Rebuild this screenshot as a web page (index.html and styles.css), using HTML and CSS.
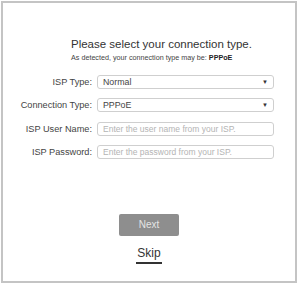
FILE: index.html
```html
<!DOCTYPE html>
<html lang="en">
<head>
  <meta charset="UTF-8">
  <meta name="viewport" content="width=device-width, initial-scale=1.0">
  <title>Connection Type</title>
  <link rel="stylesheet" href="styles.css">
</head>
<body>
  <div class="panel">
    <div class="intro">
      <h2>Please select your connection type.</h2>
      <p>As detected, your connection type may be: <strong>PPPoE</strong></p>
    </div>

    <div class="form">
      <label class="form-label">ISP Type:</label>
      <div class="select-box">
        <span>Normal</span>
        <span class="arrow">&#9660;</span>
      </div>

      <label class="form-label">Connection Type:</label>
      <div class="select-box">
        <span>PPPoE</span>
        <span class="arrow">&#9660;</span>
      </div>

      <label class="form-label" for="ispUser">ISP User Name:</label>
      <input type="text" id="ispUser" class="text-box" placeholder="Enter the user name from your ISP.">

      <label class="form-label" for="ispPass">ISP Password:</label>
      <input type="text" id="ispPass" class="text-box" placeholder="Enter the password from your ISP.">
    </div>

    <div class="actions">
      <button class="next-btn">Next</button>
      <a class="skip-link" href="#">Skip</a>
    </div>
  </div>
</body>
</html>
```

FILE: styles.css
```css
* {
  box-sizing: border-box;
}
body {
  font-family: 'Liberation Sans', Arial, sans-serif;
  margin: 0;
  padding: 0;
  background: #fff;
  color: #333;
}
.panel {
  margin: 1px;
  width: 296px;
  height: 282px;
  border: 2px solid #c4c4c4;
}
.intro {
  padding: 34px 0 0 68px;
}
.intro h2 {
  margin: 0;
  font-size: 11.5px;
  line-height: 14px;
  font-weight: normal;
  color: #333;
}
.intro p {
  margin: 2px 0 0;
  font-size: 7.2px;
  line-height: 9px;
  color: #444;
}
.intro strong {
  color: #222;
}
.form {
  display: grid;
  grid-template-columns: 89px 177px;
  column-gap: 5px;
  row-gap: 9.33px;
  margin-top: 13px;
}
.form-label {
  text-align: right;
  font-size: 9.2px;
  line-height: 14px;
  color: #444;
}
.select-box, .text-box {
  height: 14px;
  border: 1px solid #cfcfcf;
  border-radius: 3px;
  font-family: inherit;
  font-size: 8.8px;
  color: #444;
  background: #fff;
  padding: 0 5px;
}
.select-box {
  display: flex;
  align-items: center;
  justify-content: space-between;
}
.arrow {
  font-size: 6px;
  color: #333;
  padding-right: 0;
}
.text-box {
  width: 177px;
  outline: none;
  font-size: 8.5px;
}
.text-box::placeholder {
  color: #b4b4b4;
}
.actions {
  display: flex;
  flex-direction: column;
  align-items: center;
  margin-top: 55px;
}
.next-btn {
  width: 60px;
  height: 22px;
  border: none;
  border-radius: 2px;
  background: #8e8e8e;
  color: #e4e4e4;
  font-family: inherit;
  font-size: 10px;
  cursor: pointer;
}
.skip-link {
  margin-top: 10px;
  font-size: 12px;
  line-height: 14px;
  padding: 0 1px 2px;
  color: #333;
  text-decoration: none;
  border-bottom: 2px solid #333;
}
```
